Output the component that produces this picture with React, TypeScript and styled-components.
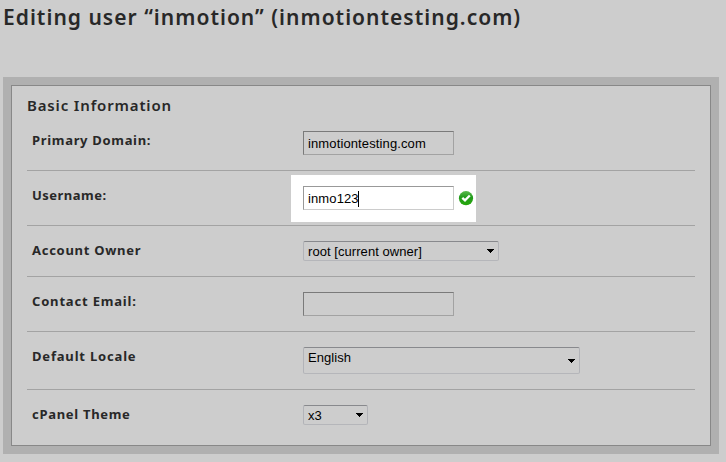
import React from "react";
import styled, { createGlobalStyle } from "styled-components";

const GlobalStyle = createGlobalStyle`
  * { box-sizing: border-box; }
  html, body { margin: 0; background: #cdcdcd; }
  body { overflow: hidden; }
`;

const Page = styled.main`
  width: 726px;
  height: 462px;
  padding: 0 7px 8px 3px;
  background: #cdcdcd;
  color: #282828;
  font-family: "Noto Sans", "Open Sans", sans-serif;
  display: flex;
  flex-direction: column;
`;

const Title = styled.h1`
  margin: 0;
  height: 77px;
  padding-top: 2px;
  font-size: 21px;
  line-height: 30px;
  font-weight: 600;
  letter-spacing: 1.02px;
  white-space: nowrap;
`;

const Frame = styled.section`
  flex: 1;
  padding: 8px;
  background: #b0b0b0;
  display: flex;
`;

const Panel = styled.div`
  flex: 1;
  padding: 0 15px;
  border: 1px solid #888;
  background: #cdcdcd;
`;

const SectionTitle = styled.h2`
  margin: 0;
  height: 30px;
  padding-top: 8px;
  font-size: 15px;
  line-height: 22px;
  font-weight: 600;
  letter-spacing: 0.85px;
  white-space: nowrap;
`;

const Row = styled.div`
  display: grid;
  grid-template-columns: 271px 1fr;
  padding: 15px 0 15px 5px;
  border-bottom: 1px solid #a3a3a3;
  &:last-child { border-bottom: 0; }
`;

const Label = styled.span<{ $spacing: number }>`
  height: 18px;
  font-size: 13px;
  line-height: 18px;
  font-weight: 700;
  letter-spacing: ${(p) => p.$spacing}px;
  white-space: nowrap;
`;

const Control = styled.div`
  display: flex;
  align-items: center;
  justify-self: start;
`;

const Spotlight = styled(Control)`
  margin: -11px -12px -12px;
  padding: 11px 2px 12px 12px;
  background: #fff;
  gap: 4px;
`;

const Field = styled.div<{ $lit?: boolean }>`
  width: 151px;
  height: 24px;
  padding: 1px 0 0 4px;
  border: 1px solid;
  border-color: ${(p) =>
    p.$lit ? "#999 #ccc #ccc #999" : "#7a7a7a #a2a2a2 #a2a2a2 #7a7a7a"};
  color: #000;
  font: 13px/23px "Liberation Sans", Arial, sans-serif;
  letter-spacing: 0.12px;
  display: flex;
  align-items: center;
  white-space: nowrap;
`;

const Caret = styled.i`
  width: 1px;
  height: 16px;
  margin-left: -1px;
  background: #000;
`;

const Select = styled.div<{ $width: number; $height: number }>`
  width: ${(p) => p.$width}px;
  height: ${(p) => p.$height}px;
  padding: 0 4px;
  border: 1px solid;
  border-color: #88898d #b2b3b8 #b5b6ba #b2b3b8;
  border-radius: 2px;
  color: #000;
  font: 13px/19px "Liberation Sans", Arial, sans-serif;
  letter-spacing: 0.06px;
  display: flex;
  align-items: center;
  justify-content: space-between;
  white-space: nowrap;
`;

const Choice = styled.span`
  align-self: flex-start;
`;

const Arrow = () => (
  <svg width="7" height="4" viewBox="0 0 7 4" shapeRendering="crispEdges" aria-hidden="true">
    <path d="M0 0h7v1H6v1H5v1H4v1H3V3H2V2H1V1H0z" fill="#000" />
  </svg>
);

const ValidIcon = () => (
  <svg width="16" height="16" viewBox="0 0 16 16" aria-label="Valid">
    <defs>
      <linearGradient id="green" x1="0" y1="0" x2="0" y2="1">
        <stop offset="0" stopColor="#5ab94e" />
        <stop offset="0.45" stopColor="#229b1b" />
        <stop offset="1" stopColor="#27a80c" />
      </linearGradient>
    </defs>
    <circle cx="8" cy="8.2" r="7.1" fill="url(#green)" />
    <path d="M4.3 7.8L7 10.4L11.8 5.5" fill="none" stroke="#fff" strokeWidth="2.3" />
  </svg>
);

export default function App() {
  return (
    <>
      <GlobalStyle />
      <Page>
        <Title>Editing user “inmotion” (inmotiontesting.com)</Title>
        <Frame>
          <Panel>
            <SectionTitle>Basic Information</SectionTitle>
            <Row>
              <Label $spacing={0.68}>Primary Domain:</Label>
              <Control>
                <Field>inmotiontesting.com</Field>
              </Control>
            </Row>
            <Row>
              <Label $spacing={0.48}>Username:</Label>
              <Spotlight>
                <Field $lit>
                  inmo123
                  <Caret />
                </Field>
                <ValidIcon />
              </Spotlight>
            </Row>
            <Row>
              <Label $spacing={0.72}>Account Owner</Label>
              <Control>
                <Select $width={196} $height={20}>
                  <Choice>root [current owner]</Choice>
                  <Arrow />
                </Select>
              </Control>
            </Row>
            <Row>
              <Label $spacing={0.82}>Contact Email:</Label>
              <Control>
                <Field />
              </Control>
            </Row>
            <Row>
              <Label $spacing={0.82}>Default Locale</Label>
              <Control>
                <Select $width={277} $height={27}>
                  <Choice>English</Choice>
                  <Arrow />
                </Select>
              </Control>
            </Row>
            <Row>
              <Label $spacing={0.7}>cPanel Theme</Label>
              <Control>
                <Select $width={65} $height={20}>
                  <Choice>x3</Choice>
                  <Arrow />
                </Select>
              </Control>
            </Row>
          </Panel>
        </Frame>
      </Page>
    </>
  );
}
